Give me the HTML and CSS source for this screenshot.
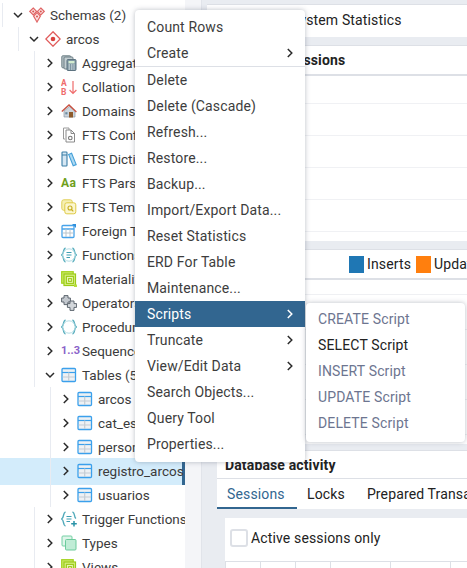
FILE: index.html
```html
<!DOCTYPE html>
<html lang="en">
<head>
    <meta charset="UTF-8">
    <title>pgAdmin</title>
    <link rel="stylesheet" href="styles.css">
</head>
<body>

<!-- icon sprites -->
<svg class="sprites" width="0" height="0">
    <symbol id="arrow-right" viewBox="0 0 12 12"><path d="M3.8 2 L7.8 6 L3.8 10" fill="none" stroke="#2b2b2b" stroke-width="1.5"/></symbol>
    <symbol id="arrow-down" viewBox="0 0 12 12"><path d="M2 4 L6 8 L10 4" fill="none" stroke="#2b2b2b" stroke-width="1.5"/></symbol>
    <symbol id="ic-schemas" viewBox="0 0 16 16">
        <g fill="#fbe3e3" stroke="#e06666" stroke-width="1.2">
            <path d="M4.2 1 L7.6 4.4 L4.2 7.8 L.8 4.4 Z"/>
            <path d="M11.8 1 L15.2 4.4 L11.8 7.8 L8.4 4.4 Z"/>
            <path d="M8 5.6 L11.4 9 L8 15 L4.6 9 Z"/>
        </g>
        <g fill="#d9534f"><circle cx="4.2" cy="4.4" r="1"/><circle cx="11.8" cy="4.4" r="1"/><circle cx="8" cy="9.4" r="1"/></g>
    </symbol>
    <symbol id="ic-schema" viewBox="0 0 16 16">
        <path d="M8 .8 L15.2 8 L8 15.2 L.8 8 Z" fill="#fff" stroke="#e05a5a" stroke-width="1.3"/>
        <circle cx="8" cy="8" r="2.3" fill="#d9423f"/>
    </symbol>
    <symbol id="ic-aggregate" viewBox="0 0 16 16">
        <rect x=".8" y=".8" width="9" height="12" rx="1" fill="#b5c2c6" stroke="#6f8087"/>
        <rect x="3" y="2" width="9" height="12" rx="1" fill="#c4cfd2" stroke="#6f8087"/>
        <rect x="6" y="4.5" width="9" height="11" rx="1" fill="#7f97a3" stroke="#5d7380"/>
        <rect x="7.5" y="6" width="6" height="2.4" fill="#d4edd0"/>
        <path d="M7.6 10h1.4M10 10h1.4M12.4 10h1.2M7.6 12h1.4M10 12h1.4M12.4 12h1.2M7.6 14h1.4M10 14h1.4M12.4 14h1.2" stroke="#e8eef0"/>
    </symbol>
    <symbol id="ic-collation" viewBox="0 0 16 16">
        <text x="0" y="7" class="ic-letter">A</text>
        <text x="0" y="15.5" class="ic-letter">B</text>
        <path d="M12 2 V14.5 M8.6 11 L12 14.5 L15.4 11" fill="none" stroke="#ef6c6c" stroke-width="1.2"/>
    </symbol>
    <symbol id="ic-domain" viewBox="0 0 16 16">
        <path d="M3 8 V14 H14 V8 L8.5 3.5 Z" fill="#cdd5dc" stroke="#8b9aa6" stroke-width=".7"/>
        <path d="M.8 8.5 L8 2 L15.4 9" fill="none" stroke="#c8503f" stroke-width="1.3"/>
        <rect x="8" y="9" width="4" height="5.5" fill="#8d5a2b"/>
        <rect x="4.3" y="9.2" width="2.2" height="2.2" fill="#6d8ba0"/>
    </symbol>
    <symbol id="ic-fts-conf" viewBox="0 0 16 16">
        <path d="M2.5 1 H8 L8 3 M2.5 1 V12 H4" fill="none" stroke="#9a9a9a"/>
        <path d="M5 3 H10 L13.5 6.5 V15 H5 Z" fill="#fff" stroke="#8a8a8a"/>
        <path d="M10 3 V6.5 H13.5" fill="none" stroke="#8a8a8a"/>
        <circle cx="9.3" cy="11" r="1.8" fill="none" stroke="#777" stroke-width="1.1"/>
    </symbol>
    <symbol id="ic-fts-dict" viewBox="0 0 16 16">
        <rect x="1" y="1" width="5" height="14" rx=".8" fill="#d6e7f3" stroke="#3b7ea6" stroke-width="1.1"/>
        <path d="M1 4 H6" stroke="#3b7ea6"/>
        <path d="M7.6 3.4 L10.6 2.2 L15.2 13.6 L12.2 14.8 Z" fill="#aed9f2" stroke="#45a0d8" stroke-width="1.1"/>
    </symbol>
    <symbol id="ic-fts-tpl" viewBox="0 0 16 16">
        <rect x=".8" y=".8" width="10.5" height="10.5" rx="2" fill="#f6efb2" stroke="#e0cf57"/>
        <rect x="3.8" y="3.8" width="11" height="11" rx="2" fill="#fbf6cf" stroke="#dfca45"/>
        <circle cx="9" cy="9" r="2" fill="none" stroke="#c7ad1f" stroke-width="1.1"/>
        <path d="M10.5 10.5 L12.3 12.3" stroke="#c7ad1f" stroke-width="1.1"/>
    </symbol>
    <symbol id="ic-foreign" viewBox="0 0 16 16">
        <rect x="1" y="2.5" width="12" height="12" rx="1" fill="#fff" stroke="#47a3ea" stroke-width="1.3"/>
        <path d="M1 6 H13" stroke="#47a3ea" stroke-width="1.5"/>
        <path d="M5 6 V14 M9 6 V14 M1.5 10 H12.5" stroke="#b9c4cc"/>
        <path d="M11 1 H15 V5 Z" fill="#2f8fdc"/>
    </symbol>
    <symbol id="ic-function" viewBox="0 0 16 16">
        <path d="M4.5 .8 C1.5 2 3.5 6.5 .6 8 C3.5 9.5 1.5 14 4.5 15.2" fill="none" stroke="#4fa9ba" stroke-width="1.4"/>
        <path d="M11.5 .8 C14.5 2 12.5 6.5 15.4 8 C12.5 9.5 14.5 14 11.5 15.2" fill="none" stroke="#4fa9ba" stroke-width="1.4"/>
        <circle cx="8" cy="8" r="6.2" fill="none" stroke="#b3dde5"/>
        <path d="M5.5 5.5 H10.5 M5.5 8 H10.5 M5.5 10.5 H9" stroke="#3f9fb3" stroke-width="1.2"/>
    </symbol>
    <symbol id="ic-trigger" viewBox="0 0 16 16">
        <path d="M4.5 .8 C1.5 2 3.5 6.5 .6 8 C3.5 9.5 1.5 14 4.5 15.2" fill="none" stroke="#4fa9ba" stroke-width="1.4"/>
        <path d="M11.5 .8 C14.5 2 12.5 6 15 7.5" fill="none" stroke="#4fa9ba" stroke-width="1.4"/>
        <path d="M5.5 5.5 H10.5 M5.5 8 H10.5 M5.5 10.5 H9" stroke="#3f9fb3" stroke-width="1.2"/>
        <path d="M13 10 V15.6 M10.2 12.8 H15.8" stroke="#2a93a8" stroke-width="1.5"/>
    </symbol>
    <symbol id="ic-matview" viewBox="0 0 16 16">
        <rect x=".7" y=".7" width="11.5" height="11.5" fill="#c9e868" stroke="#a3d21c" stroke-width="1.2"/>
        <rect x="3" y="3" width="11.5" height="11.5" fill="#d4ee80" stroke="#9ccb18" stroke-width="1.2"/>
        <rect x="5.4" y="5.4" width="7" height="7" fill="#e8f5b8" stroke="#9ccb18" stroke-width="1.1"/>
        <rect x="7.6" y="7.6" width="2.8" height="2.8" fill="none" stroke="#9ccb18"/>
        <path d="M13 13.5 H16 V16 H13 Z" fill="#b7dd3c"/>
    </symbol>
    <symbol id="ic-operator" viewBox="0 0 16 16">
        <path d="M3 .6 H7 V3 H9.4 V7 H7 V9.6 H3 V7 H.6 V3 H3 Z" fill="#c3c8ce" stroke="#5f6770"/>
        <path d="M9 6 H13 V8.6 H15.6 V12.4 H13 V15.4 H9 V12.4 H6.4 V8.6 H9 Z" fill="#d3d7db" stroke="#5f6770"/>
    </symbol>
    <symbol id="ic-procedure" viewBox="0 0 16 16">
        <path d="M4.5 .8 C1.5 2 3.5 6.5 .6 8 C3.5 9.5 1.5 14 4.5 15.2" fill="none" stroke="#4fa9ba" stroke-width="1.4"/>
        <path d="M11.5 .8 C14.5 2 12.5 6.5 15.4 8 C12.5 9.5 14.5 14 11.5 15.2" fill="none" stroke="#4fa9ba" stroke-width="1.4"/>
        <circle cx="8" cy="8" r="6.2" fill="none" stroke="#b3dde5"/>
    </symbol>
    <symbol id="ic-table" viewBox="0 0 16 16">
        <rect x="1" y="1.5" width="13.5" height="13" rx="1" fill="#eef1f4" stroke="#3ba0ec" stroke-width="1.3"/>
        <path d="M1 5.5 H14.5" stroke="#3ba0ec" stroke-width="1.2"/>
        <path d="M7.7 5.5 V14 M1.6 10 H14" stroke="#c4ccd3" stroke-width="1.2"/>
    </symbol>
    <symbol id="ic-types" viewBox="0 0 16 16">
        <rect x="1" y="1" width="10" height="10" rx="1" fill="#dff5ea" stroke="#75d0a4"/>
        <rect x="4.5" y="4.5" width="10.5" height="10.5" rx="1" fill="#c0ecd6" stroke="#6ccb9c"/>
    </symbol>
</svg>

<div class="app">

    <!-- browser tree -->
    <aside class="tree">
        <div class="row lv0"><svg class="arrow"><use href="#arrow-down"/></svg><svg class="icon"><use href="#ic-schemas"/></svg><span>Schemas (2)</span></div>
        <div class="row lv1"><svg class="arrow"><use href="#arrow-down"/></svg><svg class="icon"><use href="#ic-schema"/></svg><span>arcos</span></div>
        <div class="row lv2"><svg class="arrow"><use href="#arrow-right"/></svg><svg class="icon"><use href="#ic-aggregate"/></svg><span>Aggregates</span></div>
        <div class="row lv2"><svg class="arrow"><use href="#arrow-right"/></svg><svg class="icon"><use href="#ic-collation"/></svg><span>Collations</span></div>
        <div class="row lv2"><svg class="arrow"><use href="#arrow-right"/></svg><svg class="icon"><use href="#ic-domain"/></svg><span>Domains</span></div>
        <div class="row lv2"><svg class="arrow"><use href="#arrow-right"/></svg><svg class="icon"><use href="#ic-fts-conf"/></svg><span>FTS Configurations</span></div>
        <div class="row lv2"><svg class="arrow"><use href="#arrow-right"/></svg><svg class="icon"><use href="#ic-fts-dict"/></svg><span>FTS Dictionaries</span></div>
        <div class="row lv2"><svg class="arrow"><use href="#arrow-right"/></svg><span class="icon icon-aa">Aa</span><span>FTS Parsers</span></div>
        <div class="row lv2"><svg class="arrow"><use href="#arrow-right"/></svg><svg class="icon"><use href="#ic-fts-tpl"/></svg><span>FTS Templates</span></div>
        <div class="row lv2"><svg class="arrow"><use href="#arrow-right"/></svg><svg class="icon"><use href="#ic-foreign"/></svg><span>Foreign Tables</span></div>
        <div class="row lv2"><svg class="arrow"><use href="#arrow-right"/></svg><svg class="icon"><use href="#ic-function"/></svg><span>Functions</span></div>
        <div class="row lv2"><svg class="arrow"><use href="#arrow-right"/></svg><svg class="icon"><use href="#ic-matview"/></svg><span>Materialized Views</span></div>
        <div class="row lv2"><svg class="arrow"><use href="#arrow-right"/></svg><svg class="icon"><use href="#ic-operator"/></svg><span>Operators</span></div>
        <div class="row lv2"><svg class="arrow"><use href="#arrow-right"/></svg><svg class="icon"><use href="#ic-procedure"/></svg><span>Procedures</span></div>
        <div class="row lv2"><svg class="arrow"><use href="#arrow-right"/></svg><span class="icon icon-seq">1..3</span><span>Sequences</span></div>
        <div class="row lv2"><svg class="arrow"><use href="#arrow-down"/></svg><svg class="icon"><use href="#ic-table"/></svg><span>Tables (5)</span></div>
        <div class="row lv3"><svg class="arrow"><use href="#arrow-right"/></svg><svg class="icon"><use href="#ic-table"/></svg><span>arcos</span></div>
        <div class="row lv3"><svg class="arrow"><use href="#arrow-right"/></svg><svg class="icon"><use href="#ic-table"/></svg><span>cat_estados</span></div>
        <div class="row lv3"><svg class="arrow"><use href="#arrow-right"/></svg><svg class="icon"><use href="#ic-table"/></svg><span>personas</span></div>
        <div class="row lv3 selected"><svg class="arrow"><use href="#arrow-right"/></svg><svg class="icon"><use href="#ic-table"/></svg><span>registro_arcos</span></div>
        <div class="row lv3"><svg class="arrow"><use href="#arrow-right"/></svg><svg class="icon"><use href="#ic-table"/></svg><span>usuarios</span></div>
        <div class="row lv2"><svg class="arrow"><use href="#arrow-right"/></svg><svg class="icon"><use href="#ic-trigger"/></svg><span>Trigger Functions</span></div>
        <div class="row lv2"><svg class="arrow"><use href="#arrow-right"/></svg><svg class="icon"><use href="#ic-types"/></svg><span>Types</span></div>
        <div class="row lv2"><svg class="arrow"><use href="#arrow-right"/></svg><svg class="icon"><use href="#ic-matview"/></svg><span>Views</span></div>
    </aside>

    <div class="gutter"></div>

    <!-- dashboard -->
    <main class="dash">
        <div class="panel title-panel">System Statistics</div>

        <section class="panel sessions-panel">
            <h3 class="panel-head">Sessions</h3>
            <div class="stat-row first"></div>
            <div class="stat-row"></div>
            <div class="stat-row"></div>
            <div class="stat-row"></div>
            <div class="stat-row"></div>
        </section>

        <section class="panel legend-panel">
            <div class="legend">
                <span class="swatch swatch-blue"></span><span>Inserts</span>
                <span class="swatch swatch-orange"></span><span>Updates</span>
            </div>
            <div class="legend-row short"></div>
            <div class="legend-row"></div>
            <div class="legend-row"></div>
            <div class="legend-row"></div>
            <div class="legend-row"></div>
        </section>

        <section class="panel activity-panel">
            <h3 class="activity-head">Database activity</h3>
            <div class="tabs">
                <span class="tab active">Sessions</span>
                <span class="tab">Locks</span>
                <span class="tab">Prepared Transactions</span>
            </div>
            <div class="tab-body">
                <div class="tab-card">
                    <label class="check"><span class="box"></span>Active sessions only</label>
                    <div class="grid-head">
                        <span></span><span></span><span></span><span></span><span></span><span></span>
                    </div>
                </div>
            </div>
        </section>
    </main>

    <!-- context menu -->
    <div class="menu main-menu">
        <div class="item">Count Rows</div>
        <div class="item">Create<svg class="chev"><use href="#arrow-right"/></svg></div>
        <div class="sep"></div>
        <div class="item">Delete</div>
        <div class="item">Delete (Cascade)</div>
        <div class="item">Refresh...</div>
        <div class="item">Restore...</div>
        <div class="item">Backup...</div>
        <div class="item">Import/Export Data...</div>
        <div class="item">Reset Statistics</div>
        <div class="item">ERD For Table</div>
        <div class="item">Maintenance...</div>
        <div class="item on">Scripts<svg class="chev"><use href="#arrow-right"/></svg></div>
        <div class="item">Truncate<svg class="chev"><use href="#arrow-right"/></svg></div>
        <div class="item">View/Edit Data<svg class="chev"><use href="#arrow-right"/></svg></div>
        <div class="item">Search Objects...</div>
        <div class="item">Query Tool</div>
        <div class="item">Properties...</div>
    </div>

    <div class="menu sub-menu">
        <div class="item off">CREATE Script</div>
        <div class="item">SELECT Script</div>
        <div class="item off">INSERT Script</div>
        <div class="item off">UPDATE Script</div>
        <div class="item off">DELETE Script</div>
    </div>
</div>

</body>
</html>
```

FILE: styles.css
```css
/* === Page === */
html, body {
    margin: 0;
    height: 100%;
    overflow: hidden;
}

body {
    font-family: Roboto, "Liberation Sans", sans-serif;
    font-size: 14px;
    color: #222;
}

.sprites {
    display: block;
    height: 0;
}

.app {
    display: flex;
    position: relative;
    height: 568px;
    overflow: hidden;
}

/* === Browser tree === */
.tree {
    flex: 0 0 185px;
    width: 185px;
    padding-top: 3px;
    box-sizing: border-box;
    background: #fff;
    overflow: hidden;
    isolation: isolate;
    font-size: 13.5px;
    color: #3b3b3b;
}

.row {
    display: flex;
    align-items: center;
    position: relative;
    height: 24px;
    box-sizing: border-box;
    border-left: 1px solid #e8ebf1;
    white-space: nowrap;
}

.lv0 { margin-left: 2px; }
.lv1 { margin-left: 18px; }
.lv2 { margin-left: 34px; }
.lv3 { margin-left: 50px; }

.row.selected::before {
    content: "";
    position: absolute;
    z-index: -1;
    left: -60px;
    right: 0;
    top: -1px;
    bottom: -2px;
    background: #d3ecfb;
    border-right: 3px solid #326690;
}

.arrow {
    flex: none;
    width: 12px;
    height: 12px;
    margin: 0 5px 0 9px;
}

.icon {
    flex: none;
    width: 16px;
    height: 16px;
    margin-right: 5px;
}

.ic-letter {
    font: bold 8.5px Roboto, sans-serif;
    fill: #ef6c6c;
}

.icon-aa {
    font-size: 12px;
    font-weight: bold;
    line-height: 16px;
    color: #6f9f1c;
    letter-spacing: .4px;
}

.icon-seq {
    font-size: 11px;
    font-weight: bold;
    line-height: 16px;
    color: #8a63c9;
    white-space: nowrap;
}

.gutter {
    flex: 0 0 17px;
    background: #f4f5f8;
}

/* === Dashboard === */
.dash {
    flex: 1;
    min-width: 0;
    display: flex;
    flex-direction: column;
    padding-top: 4px;
    padding-left: 5px;
    background: #e9ecf1;
    border-left: 1px solid #e1e4ea;
    margin-left: -1px;
    letter-spacing: .14px;
}

.panel {
    background: #fff;
    border-top: 1px solid #dde0e6;
}

.title-panel {
    flex: none;
    height: 32px;
    line-height: 31px;
    padding-left: 84px;
    white-space: nowrap;
}

.sessions-panel {
    flex: none;
    height: 195px;
    margin-top: 8px;
    border-top: 1px solid #dde0e6;
}

.panel-head {
    margin: 0;
    height: 28px;
    line-height: 28px;
    padding-left: 80px;
    font-size: 14px;
    font-weight: bold;
    color: #222;
    border-bottom: 2px solid #dde0e6;
    box-sizing: content-box;
    white-space: nowrap;
}

.stat-row {
    height: 31px;
    border-bottom: 1px solid #f0f1f4;
}

.stat-row.first {
    height: 27px;
}

.legend-panel {
    flex: none;
    height: 195px;
    margin-top: 8px;
    box-sizing: border-box;
    border-top: 1px solid #dde0e6;
}

.legend {
    display: flex;
    align-items: center;
    height: 28px;
    padding-left: 142px;
    white-space: nowrap;
    border-bottom: 2px solid #dde0e6;
}

.swatch {
    flex: none;
    width: 15px;
    height: 17px;
    margin-right: 3px;
}

.swatch-blue { background: #1f77b4; }

.swatch-orange {
    background: #ff7f0e;
    margin-left: 5px;
}

.legend-row {
    height: 34px;
    border-bottom: 1px solid #eff0f3;
}

.legend-row.short {
    height: 14px;
}

.activity-panel {
    flex: 1;
    margin-top: 6px;
    margin-left: 10px;
}

.activity-head {
    margin: 0;
    height: 27px;
    line-height: 28px;
    padding-left: 8px;
    font-size: 14px;
    font-weight: bold;
    color: #222;
    border-bottom: 1px solid #dde0e6;
    white-space: nowrap;
}

.tabs {
    display: flex;
    height: 30px;
    white-space: nowrap;
}

.tab {
    flex: none;
    line-height: 30px;
    padding: 0 12px 0 10px;
    box-sizing: border-box;
}

.tab.active {
    width: 80px;
    padding-right: 0;
    color: #326690;
    border-bottom: 2px solid #326690;
}

.tab-body {
    background: #e9ecf1;
    padding: 9px 0 0 8px;
    height: 100px;
}

.tab-card {
    background: #fff;
    height: 100px;
}

.check {
    display: flex;
    align-items: center;
    height: 43px;
    box-sizing: border-box;
    padding: 0 0 4px 5px;
}

.box {
    width: 14px;
    height: 14px;
    margin-right: 3px;
    border: 2px solid #dde0e6;
    border-radius: 3px;
}

.grid-head {
    display: grid;
    grid-template-columns: 35px 35px 35px 60px 60px 60px;
    border-top: 1px solid #dde0e6;
    height: 20px;
}

.grid-head span {
    border-left: 1px solid #dde0e6;
}

/* === Context menus === */
.menu {
    position: absolute;
    z-index: 5;
    box-sizing: border-box;
    background: #fff;
    border-radius: 4px;
    box-shadow: 0 0 5px rgba(60, 70, 90, .35);
    color: #3d3d3d;
    letter-spacing: .14px;
}

.main-menu {
    left: 135px;
    top: 10px;
    width: 170px;
    height: 452px;
    padding-top: 4px;
}

.sub-menu {
    left: 306px;
    top: 303px;
    width: 159px;
    height: 139px;
    padding-top: 3px;
    color: #222;
}

.item {
    display: flex;
    align-items: center;
    justify-content: space-between;
    height: 26px;
    padding: 0 9px 0 12px;
    white-space: nowrap;
}

.chev {
    width: 12px;
    height: 12px;
}

.sep {
    height: 1px;
    background: #dde0e6;
}

.item.on {
    background: #326690;
    color: #fff;
}

.item.on .chev {
    filter: brightness(0) invert(1);
}

.item.off {
    color: #6d7590;
}
```
